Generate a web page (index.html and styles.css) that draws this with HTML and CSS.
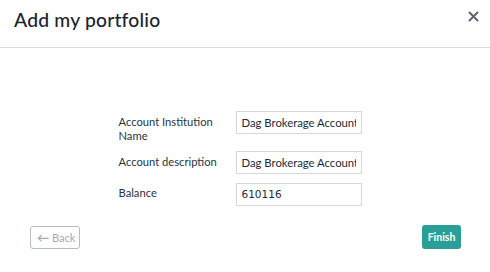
FILE: index.html
```html
<!DOCTYPE html>
<html>
<head>
<meta charset="utf-8">
<link rel="stylesheet" href="styles.css">
</head>
<body>
<div class="modal">
  <div class="header">
    <h1 class="title">Add my portfolio</h1>
    <button class="close" aria-label="Close">
      <svg width="11" height="11" viewBox="0 0 11 11"><path d="M1.5 1.5 L9.5 9.5 M9.5 1.5 L1.5 9.5" stroke="#5c6670" stroke-width="2" stroke-linecap="round"/></svg>
    </button>
  </div>
  <div class="body">
    <div class="form">
      <label class="label">Account Institution Name</label>
      <div class="field"><input class="input" value="Dag Brokerage Account"></div>
      <label class="label">Account description</label>
      <div class="field"><input class="input" value="Dag Brokerage Account"></div>
      <label class="label">Balance</label>
      <div class="field"><input class="input num" value="610116"></div>
    </div>
  </div>
  <div class="footer">
    <button class="btn back"><span class="arrow">&#8592;</span> Back</button>
    <button class="btn finish">Finish</button>
  </div>
</div>
</body>
</html>
```
FILE: styles.css
```css
* { box-sizing: border-box; }
html, body { margin: 0; padding: 0; background: #fff; }
body { font-family: "Lato", "Noto Sans", sans-serif; color: #1e2a36; }
.modal { width: 490px; height: 272px; display: flex; flex-direction: column; }
.header { height: 48px; border-bottom: 1px solid #dcdcdc; display: flex; justify-content: space-between; align-items: flex-start; padding: 0 10px 0 14px; }
.title { margin: 8px 0 0; font-size: 19.3px; font-weight: 500; color: #1b2430; letter-spacing: 0.2px; }
.close { margin-top: 9px; background: none; border: none; padding: 0; width: 14px; height: 14px; display: flex; align-items: center; justify-content: center; }
.body { flex: 1; display: flex; justify-content: center; align-items: flex-start; padding: 63px 0 0 0; }
.form { display: grid; grid-template-columns: 117px 126px; row-gap: 8px; margin-left: -10px; align-items: start; }
.label { font-size: 11.2px; line-height: 14px; color: #2a3440; padding-top: 4px; padding-right: 6px; }
.field { height: 23px; }
.input { width: 126px; height: 23px; border: 1px solid #d8d8d8; padding: 0 5px; font-family: "Lato", "Noto Sans", sans-serif; font-size: 11.3px; color: #1e2a36; background: #fff; outline: none; }
.input.num { font-family: "DejaVu Sans", sans-serif; font-size: 10.5px; }
.footer { display: flex; justify-content: space-between; align-items: flex-end; padding: 0 29px 23px 30px; }
.btn { font-family: "Lato", "Noto Sans", sans-serif; font-size: 10.5px; border-radius: 3px; height: 23px; padding: 0 8px; }
.back { width: 50px; background: #fff; border: 1px solid #b7bcc1; color: #a3abb2; display: flex; align-items: center; gap: 3px; padding: 0 6px; font-size: 11px; }
.arrow { font-size: 12px; font-weight: 700; }
.finish { width: 39px; background: #2a9f97; border: none; color: #fff; font-weight: 700; height: 24px; padding: 0; }
```
